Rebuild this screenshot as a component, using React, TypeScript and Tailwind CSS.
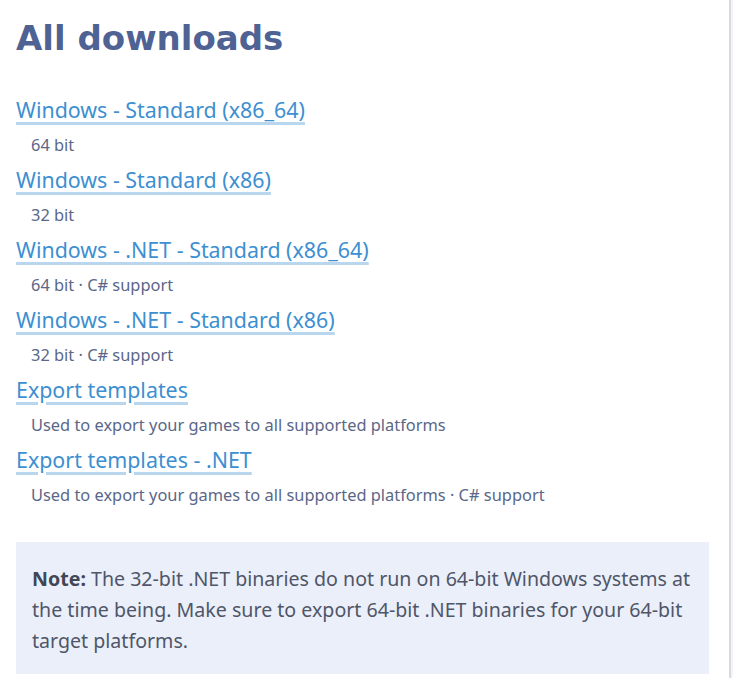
import React from "react";

const items = [
  { t: "Windows - Standard (x86_64)", d: "64 bit" },
  { t: "Windows - Standard (x86)", d: "32 bit" },
  { t: "Windows - .NET - Standard (x86_64)", d: "64 bit · C# support" },
  { t: "Windows - .NET - Standard (x86)", d: "32 bit · C# support" },
  { t: "Export templates", d: "Used to export your games to all supported platforms" },
  { t: "Export templates - .NET", d: "Used to export your games to all supported platforms · C# support" },
];

export default function App() {
  return (
    <div className="flex min-h-[678px] w-[733px] bg-[#f3f4f7]">
      <div className="w-[731px] shrink-0 overflow-hidden border-r-2 border-[#d9dadd] bg-white pl-4 pr-[20px] pt-[14px]">
        <h1
          className="text-[34px] font-bold leading-[48px] text-[#4e6294]"
          style={{ fontFamily: "'DejaVu Sans', Lato, sans-serif" }}
        >
          All downloads
        </h1>
        <div className="mt-[33px]" style={{ fontFamily: "'Noto Sans', 'Open Sans', sans-serif" }}>
          {items.map((it) => (
            <div key={it.t} className="mb-2">
              <a
                href="#"
                className="block text-[21.4px] leading-[30px] text-[#3d8fd1] underline decoration-[#b8d6ee] decoration-[3px] underline-offset-[4px]"
              >
                {it.t}
              </a>
              <div className="mt-2 pl-[15px] text-[16.4px] leading-[24px] text-[#5a6788]">{it.d}</div>
            </div>
          ))}
        </div>
        <div
          className="mt-[35px] bg-[#ebeffa] px-4 pb-[18px] pt-[21px] text-[19.6px] leading-[31px] text-[#4f5668]"
          style={{ fontFamily: "'Noto Sans', 'Open Sans', sans-serif" }}
        >
          <strong className="font-bold text-[#3f4656]">Note:</strong> The 32-bit .NET binaries do not run on 64-bit
          Windows systems at the time being. Make sure to export 64-bit .NET binaries for your 64-bit target
          platforms.
        </div>
      </div>
    </div>
  );
}
